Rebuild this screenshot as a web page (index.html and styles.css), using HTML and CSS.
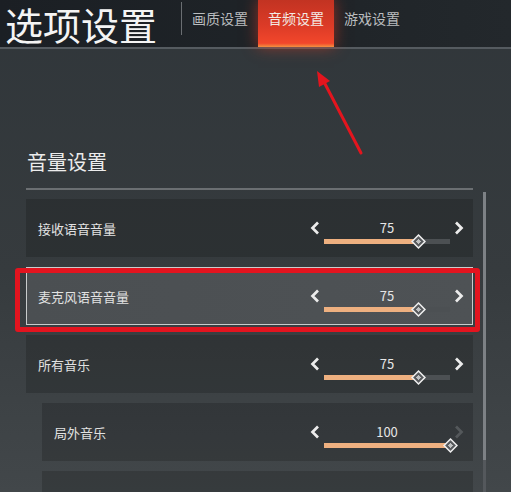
FILE: index.html
```html
<!DOCTYPE html>
<html lang="zh-CN">
<head>
    <meta charset="UTF-8">
    <meta name="viewport" content="width=device-width, initial-scale=1.0">
    <title>选项设置</title>
    <link rel="stylesheet" href="styles.css">
</head>
<body>

    <!-- Top bar -->
    <header class="topbar">
        <h1 class="title">选项设置</h1>
        <span class="divider"></span>
        <nav class="tabs">
            <a class="tab">画质设置</a>
            <a class="tab active">音频设置</a>
            <a class="tab">游戏设置</a>
        </nav>
    </header>

    <main class="content">
        <!-- annotation arrow -->
        <svg class="arrow" width="60" height="95" viewBox="0 0 60 95">
            <line x1="52" y1="87" x2="14" y2="14" stroke="#e3151e" stroke-width="3" stroke-linecap="round"/>
            <polygon points="8,5 21,15 10,21" fill="#e3151e"/>
        </svg>

        <h2 class="section-title">音量设置</h2>
        <div class="section-line"></div>

        <div class="panel">
            <div class="list">
                <div class="row">
                    <span class="label">接收语音音量</span>
                    <div class="slider">
                        <div class="slider-top">
                            <svg class="chev" width="10" height="14" viewBox="0 0 10 14"><polyline points="8,1.5 2.5,7 8,12.5" /></svg>
                            <span class="value">75</span>
                            <svg class="chev" width="10" height="14" viewBox="0 0 10 14"><polyline points="2,1.5 7.5,7 2,12.5" /></svg>
                        </div>
                        <div class="bar">
                            <div class="fill" style="width: 75%"></div>
                            <svg class="thumb" style="left: 75%" width="15" height="15" viewBox="0 0 14 14"><polygon points="7,1 13,7 7,13 1,7" class="t-out"/><polygon points="7,4 10,7 7,10 4,7" class="t-in"/></svg>
                        </div>
                    </div>
                </div>

                <div class="row selected">
                    <span class="label">麦克风语音音量</span>
                    <div class="slider">
                        <div class="slider-top">
                            <svg class="chev" width="10" height="14" viewBox="0 0 10 14"><polyline points="8,1.5 2.5,7 8,12.5" /></svg>
                            <span class="value">75</span>
                            <svg class="chev" width="10" height="14" viewBox="0 0 10 14"><polyline points="2,1.5 7.5,7 2,12.5" /></svg>
                        </div>
                        <div class="bar">
                            <div class="fill" style="width: 75%"></div>
                            <svg class="thumb" style="left: 75%" width="15" height="15" viewBox="0 0 14 14"><polygon points="7,1 13,7 7,13 1,7" class="t-out"/><polygon points="7,4 10,7 7,10 4,7" class="t-in"/></svg>
                        </div>
                    </div>
                    <span class="mark"></span>
                </div>

                <div class="row">
                    <span class="label">所有音乐</span>
                    <div class="slider">
                        <div class="slider-top">
                            <svg class="chev" width="10" height="14" viewBox="0 0 10 14"><polyline points="8,1.5 2.5,7 8,12.5" /></svg>
                            <span class="value">75</span>
                            <svg class="chev" width="10" height="14" viewBox="0 0 10 14"><polyline points="2,1.5 7.5,7 2,12.5" /></svg>
                        </div>
                        <div class="bar">
                            <div class="fill" style="width: 75%"></div>
                            <svg class="thumb" style="left: 75%" width="15" height="15" viewBox="0 0 14 14"><polygon points="7,1 13,7 7,13 1,7" class="t-out"/><polygon points="7,4 10,7 7,10 4,7" class="t-in"/></svg>
                        </div>
                    </div>
                </div>

                <div class="row sub">
                    <span class="label">局外音乐</span>
                    <div class="slider">
                        <div class="slider-top">
                            <svg class="chev" width="10" height="14" viewBox="0 0 10 14"><polyline points="8,1.5 2.5,7 8,12.5" /></svg>
                            <span class="value">100</span>
                            <svg class="chev disabled" width="10" height="14" viewBox="0 0 10 14"><polyline points="2,1.5 7.5,7 2,12.5" /></svg>
                        </div>
                        <div class="bar">
                            <div class="fill" style="width: 100%"></div>
                            <svg class="thumb" style="left: 100%" width="15" height="15" viewBox="0 0 14 14"><polygon points="7,1 13,7 7,13 1,7" class="t-out"/><polygon points="7,4 10,7 7,10 4,7" class="t-in"/></svg>
                        </div>
                    </div>
                </div>

                <div class="row sub last"></div>
            </div>

            <div class="scrollbar"><div class="scroll-thumb"></div></div>
        </div>
    </main>

</body>
</html>
```

FILE: styles.css
```css
body {
    margin: 0;
    height: 492px;
    overflow: hidden;
    font-family: "Noto Sans CJK SC", "Noto Sans", sans-serif;
    background: linear-gradient(180deg, #30363a 0%, #363b3e 55%, #42474a 100%);
    color: #e6e6e6;
}

/* top bar */
.topbar {
    display: flex;
    height: 47px;
    background: linear-gradient(90deg, #1b1f24 0%, #1f2428 60%, #23282c 100%);
    border-bottom: 2px solid #555b60;
}

.title {
    margin: 0 24px 0 5px;
    font-size: 38px;
    font-weight: 400;
    line-height: 47px;
    color: #f4f4f4;
}

.divider {
    width: 1px;
    height: 33px;
    margin-top: 2px;
    background: #6a6e72;
}

.tabs {
    display: flex;
}

.tab {
    padding: 10px 10px 0;
    font-size: 14px;
    line-height: 17px;
    color: #b9bcbe;
}

.tab.active {
    color: #f3e9e4;
    background: linear-gradient(180deg, #c23322 0%, #dc3b27 55%, #f2472b 92%, #f39240 100%);
    box-shadow: 0 0 14px rgba(235, 60, 35, 0.55);
}

/* content */
.content {
    position: relative;
    padding: 0 25px 0 26px;
}

.arrow {
    position: absolute;
    left: 309px;
    top: 17px;
}

.section-title {
    margin: 0;
    padding: 100px 0 0 1px;
    font-size: 20px;
    font-weight: 400;
    line-height: 26px;
    color: #ececec;
}

.section-line {
    height: 2px;
    margin: 13px 13px 0 0;
    background: #6b6f72;
}

.panel {
    display: flex;
    margin-top: 2px;
}

.list {
    flex: 1;
    display: flex;
    flex-direction: column;
    gap: 10px;
    padding-top: 7px;
}

.row {
    position: relative;
    display: flex;
    justify-content: space-between;
    height: 58px;
    box-sizing: border-box;
    background: rgba(0, 0, 0, 0.17);
}

.row.sub {
    margin-left: 16px;
}

.row.last {
    height: 21px;
}

.row.selected {
    background: linear-gradient(90deg, #4b4f52 0%, #4e5255 100%);
    border: 1px solid #c9cbcc;
}

.label {
    align-self: center;
    padding-left: 12px;
    font-size: 13px;
    color: #e2e2e2;
}

.row.selected .label {
    padding-left: 11px;
}

/* slider */
.slider {
    width: 154px;
    margin-right: 9px;
    padding-top: 21px;
}

.row.selected .slider {
    margin-right: 8px;
    padding-top: 20px;
}

.slider-top {
    display: flex;
    justify-content: space-between;
    align-items: center;
    height: 16px;
}

.chev {
    fill: none;
    stroke: #ececec;
    stroke-width: 2.7;
}

.chev.disabled {
    stroke: #54585b;
}

.value {
    font-size: 13px;
    line-height: 16px;
    color: #e6e6e6;
}

.bar {
    position: relative;
    height: 5px;
    margin: 3px 14px 0;
    background: #4c5053;
}

.fill {
    height: 100%;
    background: #eeb080;
}

.thumb {
    position: absolute;
    top: -5px;
    margin-left: -7.5px;
}

.t-out {
    fill: #5a5d60;
    stroke: #f0f0f0;
    stroke-width: 1.4;
}

.t-in {
    fill: #bfc1c2;
    stroke: #3a3d40;
    stroke-width: 0.8;
}

/* red annotation box */
.mark {
    position: absolute;
    left: -12px;
    right: -8px;
    top: 0;
    bottom: -8px;
    border: 5px solid #e3141f;
    border-radius: 3px;
}

/* scrollbar */
.scrollbar {
    width: 3px;
    margin-left: 10px;
    background: #54585c;
}

.scroll-thumb {
    height: 268px;
    background: #7d8185;
}
```
